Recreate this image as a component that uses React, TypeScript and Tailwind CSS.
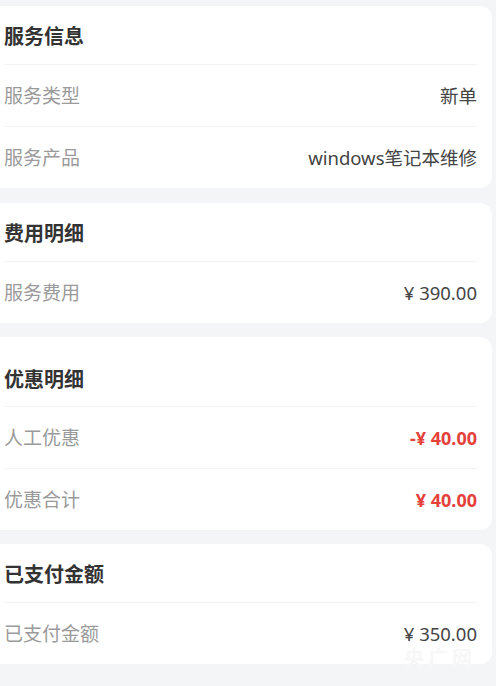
type Row = { label: string; value: string; tone?: 'red' };

type Section = { title: string; rows: Row[]; tall?: boolean };

const sections: Section[] = [
  {
    title: '服务信息',
    rows: [
      { label: '服务类型', value: '新单' },
      { label: '服务产品', value: 'windows笔记本维修' },
    ],
  },
  {
    title: '费用明细',
    rows: [{ label: '服务费用', value: '¥ 390.00' }],
  },
  {
    title: '优惠明细',
    tall: true,
    rows: [
      { label: '人工优惠', value: '-¥ 40.00', tone: 'red' },
      { label: '优惠合计', value: '¥ 40.00', tone: 'red' },
    ],
  },
  {
    title: '已支付金额',
    rows: [{ label: '已支付金额', value: '¥ 350.00' }],
  },
];

function Card({ section, first }: { section: Section; first: boolean }) {
  return (
    <div className={`-ml-3 mr-1 rounded-xl bg-white pl-4 pr-[15px] ${first ? 'mb-[15px]' : 'mb-[14px]'}`}>
      <div
        className={`flex items-center text-[20px] font-bold text-[#333333] ${
          section.tall ? 'h-[69px] pt-4' : 'h-[58px] pt-1'
        }`}
      >
        {section.title}
      </div>
      {section.rows.map((row) => (
        <div
          key={row.label}
          className="flex h-[62px] items-center justify-between border-t border-[#f2f2f2] text-[19px] leading-[22px]"
        >
          <span className="text-[#9a9a9a]">{row.label}</span>
          <span
            className={
              row.tone === 'red'
                ? 'text-[18px] font-bold text-[#e5413b]'
                : 'text-[18.5px] text-[#444444]'
            }
          >
            {row.value}
          </span>
        </div>
      ))}
    </div>
  );
}

export default function App() {
  return (
    <div
      className="relative h-[686px] w-[496px] overflow-hidden bg-[#f4f5f7] pt-[6px]"
      style={{ fontFamily: '"Noto Sans", "Noto Sans CJK SC", sans-serif' }}
    >
      <div className="flex flex-col">
        {sections.map((s, i) => (
          <Card key={s.title} section={s} first={i === 0} />
        ))}
      </div>
      <div className="pointer-events-none absolute right-[20px] top-[649px] text-[20px] leading-[20px] font-bold tracking-[4px] text-[#f7f7f7]">
        央广网
      </div>
    </div>
  );
}
